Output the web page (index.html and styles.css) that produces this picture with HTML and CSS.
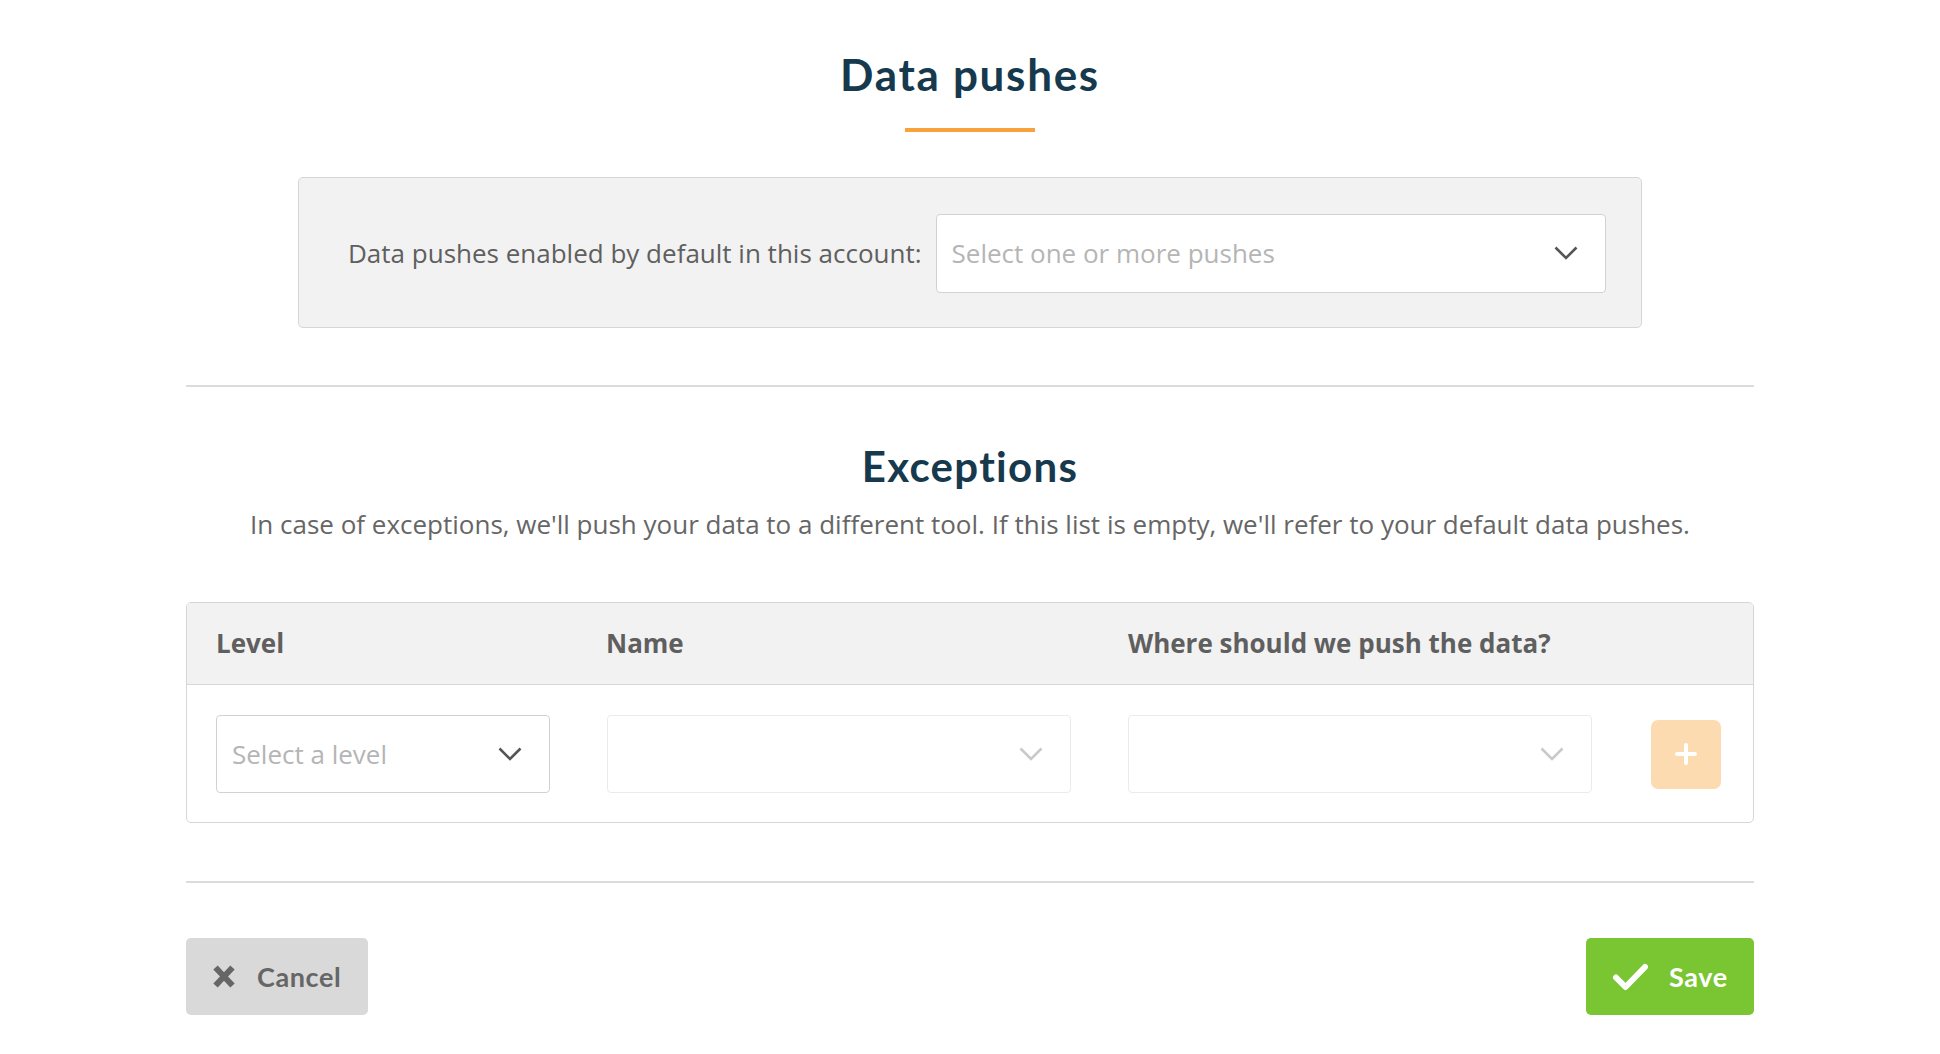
FILE: index.html
```html
<!DOCTYPE html>
<html lang="en">
<head>
<meta charset="utf-8">
<title>Data pushes</title>
<link rel="stylesheet" href="styles.css">
</head>
<body>
<main class="page">
  <h1 class="title">Data pushes</h1>
  <div class="accent"></div>

  <section class="defaults">
    <span class="defaults-label">Data pushes enabled by default in this account:</span>
    <div class="select select-grow">
      <span class="placeholder">Select one or more pushes</span>
      <svg class="chev" width="24" height="14" viewBox="0 0 24 14"><polyline points="1.5,1.5 12,12 22.5,1.5" fill="none" stroke="#555" stroke-width="2.6" stroke-linejoin="miter"/></svg>
    </div>
  </section>

  <hr class="divider">

  <h2 class="subtitle">Exceptions</h2>
  <p class="lead">In case of exceptions, we'll push your data to a different tool. If this list is empty, we'll refer to your default data pushes.</p>

  <section class="table">
    <div class="grid table-head">
      <span>Level</span>
      <span>Name</span>
      <span>Where should we push the data?</span>
      <span></span>
    </div>
    <div class="grid table-row">
      <div class="select">
        <span class="placeholder">Select a level</span>
        <svg class="chev" width="24" height="14" viewBox="0 0 24 14"><polyline points="1.5,1.5 12,12 22.5,1.5" fill="none" stroke="#555" stroke-width="2.6"/></svg>
      </div>
      <div class="select select-disabled">
        <span class="placeholder"></span>
        <svg class="chev" width="24" height="14" viewBox="0 0 24 14"><polyline points="1.5,1.5 12,12 22.5,1.5" fill="none" stroke="#c9c9c9" stroke-width="2.6"/></svg>
      </div>
      <div class="select select-disabled">
        <span class="placeholder"></span>
        <svg class="chev" width="24" height="14" viewBox="0 0 24 14"><polyline points="1.5,1.5 12,12 22.5,1.5" fill="none" stroke="#c9c9c9" stroke-width="2.6"/></svg>
      </div>
      <button class="add" type="button" aria-label="Add">
        <svg width="22" height="22" viewBox="0 0 22 22"><path d="M11 2v18M2 11h18" stroke="#fff" stroke-width="4" stroke-linecap="round"/></svg>
      </button>
    </div>
  </section>

  <hr class="divider">

  <footer class="actions">
    <button class="btn btn-cancel" type="button">
      <svg width="24" height="23" viewBox="0 0 24 23"><path d="M3.5 2.5l17 18M20.5 2.5l-17 18" stroke="#666" stroke-width="6" stroke-linecap="butt"/></svg>
      <span>Cancel</span>
    </button>
    <button class="btn btn-save" type="button">
      <svg width="37" height="28" viewBox="0 0 37 28"><path d="M4 14.5l9.5 9.5L33 4" fill="none" stroke="#fff" stroke-width="6" stroke-linecap="round" stroke-linejoin="round"/></svg>
      <span>Save</span>
    </button>
  </footer>
</main>
</body>
</html>
```

FILE: styles.css
```css
* { box-sizing: border-box; }

html, body {
  margin: 0;
  padding: 0;
  background: #fff;
}

body {
  font-family: "Open Sans", "Liberation Sans", sans-serif;
  color: #666;
}

.page {
  width: 1568px;
  margin: 0 auto;
  display: flex;
  flex-direction: column;
}

.title,
.subtitle {
  font-family: Lato, "Open Sans", sans-serif;
  font-weight: 700;
  color: #17394d;
  text-align: center;
  line-height: 52px;
  margin: 0;
}

.title {
  font-size: 44px;
  letter-spacing: 1.7px;
  margin-top: 48px;
}

.accent {
  width: 130px;
  height: 4px;
  background: #f9a23b;
  margin: 28px auto 0;
}

.defaults {
  margin: 45px 112px 0;
  height: 151px;
  background: #f2f2f2;
  border: 1px solid #d6d6d6;
  border-radius: 5px;
  display: flex;
  align-items: center;
  gap: 14px;
  padding: 1px 35px 0 49px;
}

.defaults-label {
  font-size: 26px;
  line-height: 35px;
  color: #5f5f5f;
  white-space: nowrap;
  flex: none;
}

.select {
  height: 78px;
  background: #fff;
  border: 1px solid #d2d2d2;
  border-radius: 4px;
  display: flex;
  align-items: center;
  justify-content: space-between;
  padding: 0 27px 0 15px;
}

.select-grow {
  flex: 1;
  height: 79px;
}

.select-disabled {
  border-color: #ebebeb;
}

.placeholder {
  font-size: 26px;
  line-height: 35px;
  color: #b5b5b5;
  white-space: nowrap;
}

.chev {
  flex: none;
  display: block;
}

.divider {
  border: 0;
  height: 2px;
  background: #dcdcdc;
  margin: 0;
}

.defaults + .divider {
  margin-top: 57px;
}

.subtitle {
  font-size: 42px;
  letter-spacing: 1.3px;
  margin-top: 53px;
}

.lead {
  margin: 15px 0 0;
  font-size: 26px;
  line-height: 35px;
  text-align: center;
  color: #666;
}

.table {
  margin-top: 60px;
  border: 1px solid #d6d6d6;
  border-radius: 5px;
  overflow: hidden;
}

.grid {
  display: grid;
  grid-template-columns: 334px 464px 464px 70px;
  column-gap: 57px;
  padding-left: 29px;
}

.table-head {
  background: #f2f2f2;
  height: 82px;
  border-bottom: 1px solid #d6d6d6;
  align-items: center;
  font-size: 26px;
  line-height: 35px;
  font-weight: 700;
  color: #5f5f5f;
}

.table-head span:nth-child(2) {
  margin-left: -1px;
}

.table-row {
  height: 137px;
  align-items: center;
  padding-top: 1px;
}

.add {
  width: 70px;
  height: 69px;
  border: 0;
  border-radius: 7px;
  background: #fddbb0;
  display: flex;
  align-items: center;
  justify-content: center;
  padding: 0;
  margin-left: 2px;
}

.add svg { display: block; }

.table + .divider {
  margin-top: 58px;
}

.actions {
  margin-top: 55px;
  display: flex;
  justify-content: space-between;
  align-items: center;
}

.btn {
  height: 77px;
  border: 0;
  border-radius: 5px;
  display: flex;
  align-items: center;
  font-family: Lato, "Open Sans", sans-serif;
  font-weight: 700;
  font-size: 27px;
  letter-spacing: 0.6px;
  padding: 0 26px;
}

.btn svg { display: block; flex: none; }

.btn-cancel {
  width: 182px;
  background: #d9d9d9;
  color: #666;
  gap: 21px;
}

.btn-save {
  width: 168px;
  background: #79c532;
  color: #fff;
  gap: 20px;
}
```
